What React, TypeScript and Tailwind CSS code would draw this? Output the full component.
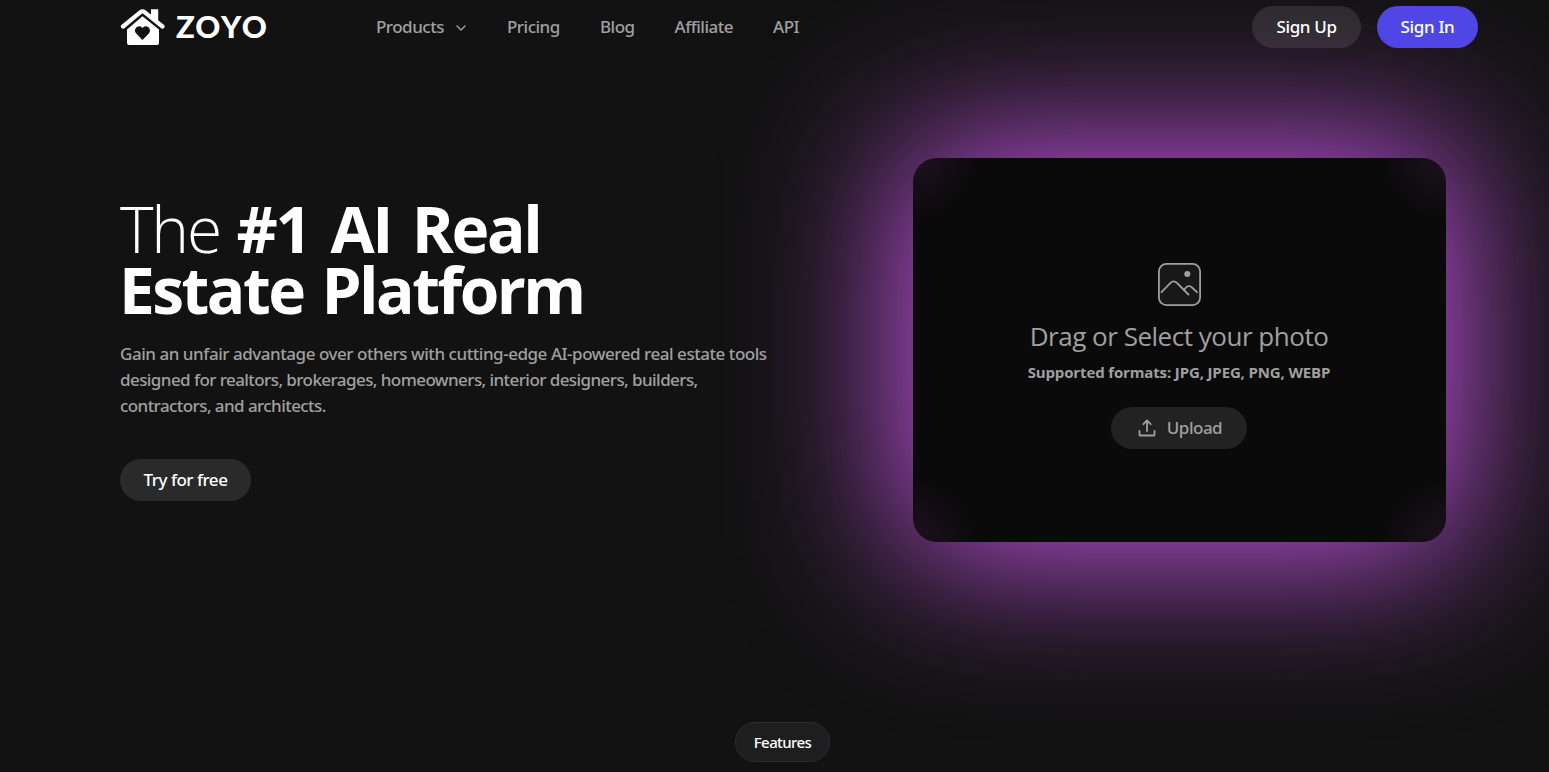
import { ChevronDown } from 'lucide-react'

const links = [
  { label: 'Pricing', cls: 'ml-10 w-[53px]' },
  { label: 'Blog', cls: 'ml-10 w-[35px]' },
  { label: 'Affiliate', cls: 'ml-[39.5px] w-[59px]' },
  { label: 'API', cls: 'ml-[39.5px] w-[26px]' },
]

function Logo() {
  return (
    <a href="#" className="flex items-center w-[147px] h-9 text-white">
      <svg width="46" height="38" viewBox="0 0 46 38" fill="none" className="shrink-0">
        <path d="M3 18.5 20.5 4.2a3.2 3.2 0 0 1 4 0L42.5 18.5" stroke="currentColor" strokeWidth="4.200" strokeLinecap="round" strokeLinejoin="round" />
        <path d="M31 1.200h7.200v13.300l-7.200-6z" fill="currentColor" />
        <path
          fillRule="evenodd"
          clipRule="evenodd"
          d="M22.5 8.2 39 21.5V35a2 2 0 0 1-2 2H9a2 2 0 0 1-2-2V21.500zM22.500 32l6.300-6.500c3-3.500-.3-8-3.600-7.300-1.300.2-2.200 1-2.700 2-.5-1-1.400-1.800-2.700-2-3.300-.7-6.600 3.800-3.600 7.300z"
          fill="currentColor"
        />
      </svg>
      <span className="ml-[10px] mt-[-2px] font-['Lato'] font-black text-[31px] leading-none tracking-[0.5px] [font-kerning:none]">
        ZOYO
      </span>
    </a>
  )
}

function Navbar() {
  return (
    <header className="flex items-center h-[54px] pl-[120px] pr-[71px]">
      <Logo />
      <nav className="flex items-center ml-[109px] text-[17px] tracking-[-0.5px] font-medium text-[#a0a0a0] whitespace-nowrap">
        <button className="flex items-center">
          <span className="w-[67px] text-left">Products</span>
          <ChevronDown size={16} strokeWidth={2} className="ml-[10px] mr-[-2px] mt-px" />
        </button>
        {links.map(link => (
          <a key={link.label} href="#" className={link.cls}>{link.label}</a>
        ))}
      </nav>
      <div className="flex gap-4 ml-auto text-[17px] tracking-[-0.35px] font-medium text-white whitespace-nowrap">
        <button className="w-[109px] h-[42px] rounded-full bg-white/10">Sign Up</button>
        <button className="w-[101px] h-[42px] rounded-full bg-[#4f46e5]">Sign In</button>
      </div>
    </header>
  )
}

function PhotoIcon() {
  return (
    <svg width="43" height="43" viewBox="0 0 43 43" fill="none" stroke="#a0a0a0" strokeWidth="1.800" strokeLinecap="round" strokeLinejoin="round" className="ml-px">
      <rect x="0.900" y="0.900" width="41.200" height="41.200" rx="7.500" fill="#181818" />
      <path d="M3.500 29.200 12.800 19.600a4 4 0 0 1 5.800 0L30.500 31.500" />
      <path d="M25.800 27l2.200-2.500a4 4 0 0 1 6 0l5 4.700" />
      <circle cx="29.300" cy="11" r="3" fill="#a0a0a0" stroke="none" />
    </svg>
  )
}

function UploadIcon() {
  return (
    <svg width="18" height="18" viewBox="0 0 18 18" fill="none" stroke="currentColor" strokeWidth="1.800" strokeLinecap="round" strokeLinejoin="round">
      <path d="M1.500 11.800V16a.5.5 0 0 0 .5.5h14a.5.5 0 0 0 .5-.5v-4.200" />
      <path d="M9 12V2M5.300 5.200 9 1.500l3.700 3.700" />
    </svg>
  )
}

function UploadCard() {
  return (
    <div className="relative">
      {/* Glow */}
      <div className="absolute -inset-[15px] rounded-3xl bg-[#c354e2] blur-[78px] pointer-events-none" />
      <div className="relative flex flex-col items-center w-[533px] h-[384px] pt-[105px] pr-px rounded-3xl bg-[#0a0a0a] bg-[radial-gradient(circle_at_0_0,#1d111f,transparent_65px),radial-gradient(circle_at_100%_0,#1d111f,transparent_65px),radial-gradient(circle_at_0_100%,#1d111f,transparent_65px),radial-gradient(circle_at_100%_100%,#1d111f,transparent_65px)] text-[#a0a0a0] whitespace-nowrap">
        <PhotoIcon />
        <p className="mt-[12px] font-['Open_Sans'] text-[26px] leading-9 tracking-[-0.48px]">Drag or Select your photo</p>
        <p className="mt-[6px] font-['Open_Sans'] text-[15px] leading-6 font-bold tracking-[-0.14px]">Supported formats: JPG, JPEG, PNG, WEBP</p>
        <button className="flex items-center justify-center gap-[11px] w-[136px] h-[42px] mt-[23px] pl-[2px] rounded-full bg-[#222] text-[17px] tracking-[-0.5px] font-medium">
          <UploadIcon />
          Upload
        </button>
      </div>
    </div>
  )
}

export default function App() {
  return (
    <div className="flex flex-col h-[772px] overflow-hidden bg-[#121212] font-['Noto_Sans','Open_Sans',sans-serif]">
      {/* Keeps the navbar above the glow */}
      <div className="relative z-10">
        <Navbar />
      </div>
      <main className="flex items-start h-[668px] pl-[120px]">
        <section className="relative z-10 w-[793px] pt-[144px]">
          <h1 className="font-['Open_Sans'] text-[64px] leading-[61px] font-bold text-white whitespace-nowrap">
            <span className="font-light tracking-[-2.200px]">The</span>{' '}
            <span className="tracking-[-2.400px] [word-spacing:6.5px]">#1 AI Real</span>
            <br />
            <span className="ml-[-1px] tracking-[-2.550px] [word-spacing:4px]">Estate Platform</span>
          </h1>
          <p className="flex flex-col mt-[21px] text-[17px] leading-[26px] font-medium text-[#a0a0a0] whitespace-nowrap">
            <span className="tracking-[-0.46px]">Gain an unfair advantage over others with cutting-edge AI-powered real estate tools</span>
            <span className="tracking-[-0.57px]">designed for realtors, brokerages, homeowners, interior designers, builders,</span>
            <span className="tracking-[-0.57px]">contractors, and architects.</span>
          </p>
          <button className="w-[131px] h-[42px] mt-10 rounded-full bg-[#2a2a2a] text-[17px] tracking-[-0.5px] font-medium text-white">
            Try for free
          </button>
        </section>
        <section className="pt-[104px]">
          <UploadCard />
        </section>
      </main>
      <div className="relative flex justify-center pl-4">
        <span className="flex items-center justify-center w-[95px] h-10 rounded-full border border-[#2b2b38] bg-[#1e1e1f] text-[15px] tracking-[-0.6px] font-medium text-white">
          Features
        </span>
      </div>
    </div>
  )
}
